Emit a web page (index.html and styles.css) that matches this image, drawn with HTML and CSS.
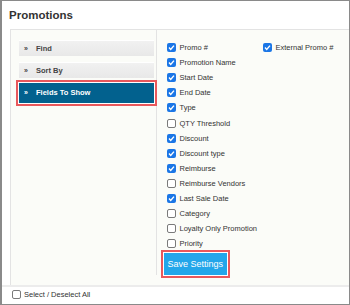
FILE: index.html
```html
<!DOCTYPE html>
<html lang="en">
<head>
  <meta charset="UTF-8" />
  <title>Promotions</title>
  <link rel="stylesheet" href="styles.css">
</head>
<body>
  <div class="frame">
    <h1 class="title">Promotions</h1>

    <div class="panel">
      <!-- Linke Spalte -->
      <aside class="sidebar">
        <div class="acc-item"><span class="bullet">»</span>Find</div>
        <div class="acc-item"><span class="bullet">»</span>Sort By</div>
        <div class="acc-item active"><span class="bullet">»</span>Fields To Show</div>
      </aside>

      <!-- Felder -->
      <section class="fields">
        <div class="pair">
          <label class="field first"><span class="box on"><svg viewBox="0 0 9 9"><path d="M2 4.6 L3.7 6.4 L7 2.6" /></svg></span>Promo #</label>
          <label class="field"><span class="box on"><svg viewBox="0 0 9 9"><path d="M2 4.6 L3.7 6.4 L7 2.6" /></svg></span>External Promo #</label>
        </div>
        <label class="field"><span class="box on"><svg viewBox="0 0 9 9"><path d="M2 4.6 L3.7 6.4 L7 2.6" /></svg></span>Promotion Name</label>
        <label class="field"><span class="box on"><svg viewBox="0 0 9 9"><path d="M2 4.6 L3.7 6.4 L7 2.6" /></svg></span>Start Date</label>
        <label class="field"><span class="box on"><svg viewBox="0 0 9 9"><path d="M2 4.6 L3.7 6.4 L7 2.6" /></svg></span>End Date</label>
        <label class="field"><span class="box on"><svg viewBox="0 0 9 9"><path d="M2 4.6 L3.7 6.4 L7 2.6" /></svg></span>Type</label>
        <label class="field"><span class="box"></span>QTY Threshold</label>
        <label class="field"><span class="box on"><svg viewBox="0 0 9 9"><path d="M2 4.6 L3.7 6.4 L7 2.6" /></svg></span>Discount</label>
        <label class="field"><span class="box on"><svg viewBox="0 0 9 9"><path d="M2 4.6 L3.7 6.4 L7 2.6" /></svg></span>Discount type</label>
        <label class="field"><span class="box on"><svg viewBox="0 0 9 9"><path d="M2 4.6 L3.7 6.4 L7 2.6" /></svg></span>Reimburse</label>
        <label class="field"><span class="box"></span>Reimburse Vendors</label>
        <label class="field"><span class="box on"><svg viewBox="0 0 9 9"><path d="M2 4.6 L3.7 6.4 L7 2.6" /></svg></span>Last Sale Date</label>
        <label class="field"><span class="box"></span>Category</label>
        <label class="field"><span class="box"></span>Loyalty Only Promotion</label>
        <label class="field"><span class="box"></span>Priority</label>
        <button class="save">Save Settings</button>
      </section>
    </div>

    <footer class="footer">
      <label class="field"><span class="box"></span>Select / Deselect All</label>
    </footer>
  </div>
</body>
</html>
```

FILE: styles.css
```css
* {
  box-sizing: border-box;
}

body, html {
  margin: 0;
  padding: 0;
  font-family: 'Liberation Sans', Arial, sans-serif;
  background: #fff;
}

.frame {
  width: 350px;
  height: 305px;
  border: 1px solid #8a8a8a;
  border-left-width: 2px;
  display: flex;
  flex-direction: column;
  overflow: hidden;
}

.title {
  margin: 0;
  height: 28px;
  padding: 7px 0 0 7px;
  font-size: 11.5px;
  line-height: 14px;
  font-weight: bold;
  color: #333;
}

.panel {
  margin-left: 8px;
  display: flex;
  background: #fbfcf8;
  border-top: 1px solid #e3e3e3;
  border-left: 1px solid #e3e3e3;
  padding-bottom: 10px;
}

.sidebar {
  width: 146px;
  padding: 9.5px 2.5px 0 8px;
  border-right: 1px solid #e3e3e3;
}

.acc-item {
  height: 16px;
  margin-bottom: 6px;
  padding-left: 5px;
  display: flex;
  align-items: center;
  font-size: 7.5px;
  font-weight: bold;
  color: #444;
  background: linear-gradient(#f1f1f1, #e8e8e8);
  border-top: 1px solid #fff;
}

.acc-item.active {
  height: 20px;
  margin-top: -1px;
  color: #fff;
  background: #02618e;
  border-top: none;
  box-shadow: 0 0 0 1px #fff, 0 0 0 3px #e8585c;
}

.bullet {
  display: inline-block;
  width: 12px;
  font-size: 7px;
}

.fields {
  flex: 1;
  padding: 10px 0 0 7px;
  display: flex;
  flex-direction: column;
  align-items: flex-start;
}

.pair {
  display: flex;
}

.field {
  height: 15.1px;
  display: flex;
  align-items: center;
  gap: 4px;
  font-size: 7.5px;
  color: #333;
}

.fields .field {
  padding-left: 2.5px;
}

.field.first {
  width: 96px;
}

.box {
  width: 9px;
  height: 9px;
  border: 1px solid #7a7a7a;
  border-radius: 2px;
  background: #fff;
  flex: none;
}

.box.on {
  border: none;
  background: #1b76e6;
}

.box svg {
  display: block;
  width: 9px;
  height: 9px;
}

.box path {
  fill: none;
  stroke: #fff;
  stroke-width: 1.4;
}

.save {
  margin-top: 1.8px;
  height: 22px;
  padding: 0 3.5px;
  border: none;
  background: #22a6ea;
  color: #fff;
  font-family: 'Liberation Sans', Arial, sans-serif;
  font-size: 9px;
  box-shadow: 0 0 0 1px #fff, 0 0 0 3px #e8585c;
}

.footer {
  flex: 1;
  border-top: 2px solid #ececec;
  padding: 0 0 0 10px;
}

.footer .field {
  height: 15px;
  gap: 3px;
}
```
